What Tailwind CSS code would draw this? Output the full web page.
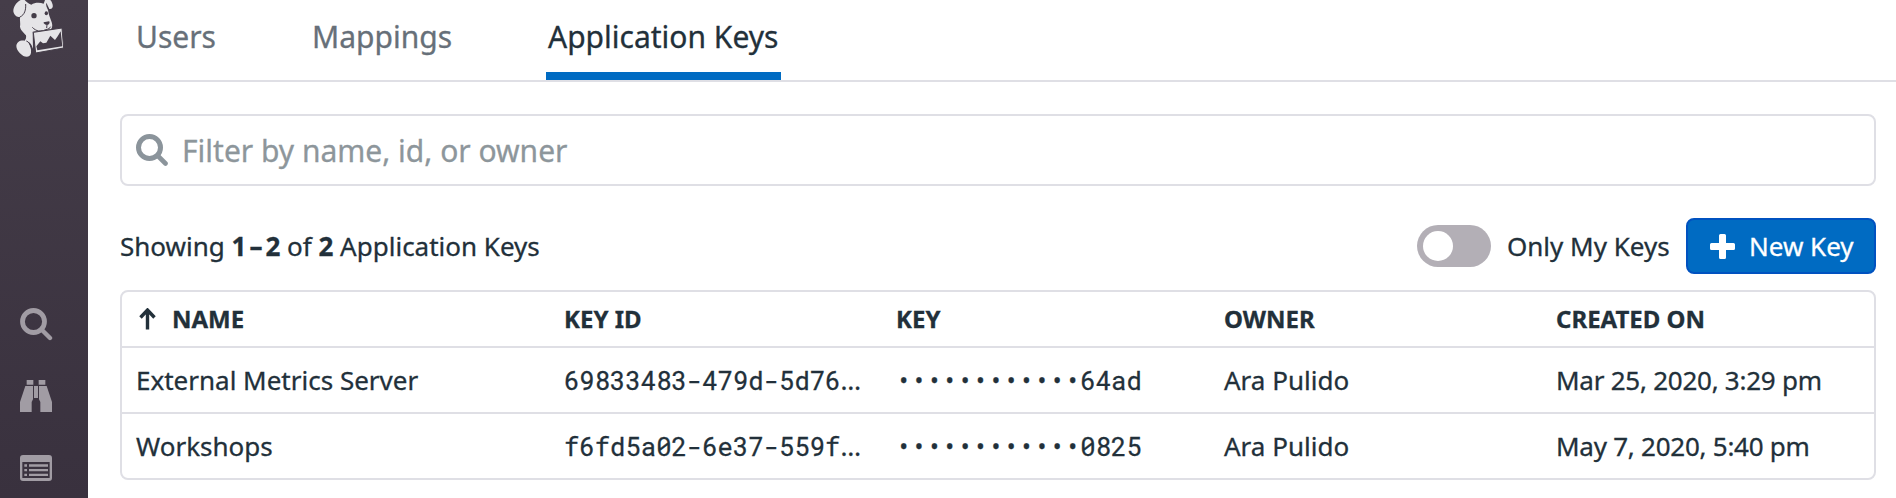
<!DOCTYPE html>
<html lang="en">
<head>
<meta charset="utf-8">
<title>Application Keys</title>
<script src="https://cdn.jsdelivr.net/npm/@tailwindcss/browser@4"></script>
</head>
<body class="h-[498px] w-[1896px] overflow-hidden bg-white font-['Noto_Sans',sans-serif] text-[26px] text-[#22303a] [-webkit-text-stroke:0.3px]">
<div class="flex h-full">
  <aside class="flex w-[88px] shrink-0 flex-col bg-linear-to-b from-[#453d49] to-[#39313e]">
    <svg class="h-[60px] w-[88px]" viewBox="0 0 264 180" fill="#e5e4e7">
      <path d="M62 0 C48 8 40 20 40 34 C42 46 52 54 60 50 C59 62 62 70 60 80 C62 92 72 98 78 106 C80 114 76 120 74 122 C60 120 50 126 49 138 C50 152 60 160 70 168 C80 172 92 171 93 158 C95 148 90 136 84 126 C92 128 96 138 99 146 L98 95 L152 88 C158 84 158 74 154 64 C150 52 146 44 144 30 C140 22 137 14 139 8 L148 27 C156 28 160 22 158 14 C156 6 153 2 151 0 L135 0 L131 11 C120 7 104 7 94 14 C85 12 78 4 74 0 Z"/>
      <g fill="#443c48">
        <ellipse cx="102" cy="47" rx="8" ry="8"/>
        <ellipse cx="139" cy="40" rx="5" ry="6"/>
        <path d="M131 67 L147 64 C150 66 149 70 147 72 C142 78 135 74 131 70 Z"/>
      </g>
      <path d="M77 12 C78 30 74 44 60 51 M97 82 C108 94 124 97 136 89 C146 88 150 84 152 80 M141 74 L140 84 M79 123 C88 126 92 134 93 142" fill="none" stroke="#443c48" stroke-width="3"/>
      <path d="M100 97 L186 84 L191 144 L107 159 Z" stroke="#443c48" stroke-width="3"/>
      <path d="M112 151 L109 139 L121 124 L129 130 L139 128 L151 107 L165 120 L173 109 L182 94 L187 139 Z" fill="#443c48"/>
    </svg>
    <nav class="mt-[247px] flex flex-col items-start pl-5">
      <svg class="h-[34px] w-[34px]" viewBox="0 0 34 34" fill="none" stroke="#a19ca4"><circle cx="13.5" cy="14.5" r="11" stroke-width="4.8"/><path d="M21.5 22.500 L30 31" stroke-width="4.400" stroke-linecap="round"/></svg>
      <svg class="mt-[39px] h-8 w-8" viewBox="0 0 96 96" fill="#a19ca4"><path d="M20 0h20v14H20zM56 0h20v14H56zM16 18h23v40l-4 8v30H0V66zM42 18h12v36H42zM57 18h23l16 48v30H61V66l-4-8z"/></svg>
      <svg class="mt-[43px] h-[26px] w-8" viewBox="0 0 96 78" fill="#a19ca4"><path fill-rule="evenodd" d="M9 0h78q9 0 9 9v60q0 9-9 9H9q-9 0-9-9V9q0-9 9-9zM7 21v48h82V21z"/><path d="M13 28h8v7h-8zM27 28h57v7H27zM13 42h8v7h-8zM27 42h57v7H27zM13 56h8v7h-8zM27 56h57v7H27z"/></svg>
    </nav>
  </aside>
  <div class="min-w-0 flex-1">
    <nav class="flex h-[82px] items-stretch border-b-2 border-[#dfdfe5] pl-[46px] text-[30px] leading-[74px] text-[#677079]">
      <a class="w-[84px] whitespace-nowrap px-0.5">Users</a>
      <a class="ml-[92px] w-[144px] whitespace-nowrap px-0.5">Mappings</a>
      <a class="ml-[92px] w-[235px] whitespace-nowrap border-b-8 border-[#006bc2] px-0.5 text-[#22303a]">Application Keys</a>
    </nav>
    <main class="pl-8 pr-5 pt-8">
      <label class="flex h-[72px] items-center rounded-lg border-2 border-[#dfdfe5] pl-3.5 text-[30px] text-[#8d969b]">
        <svg class="mr-3.5 h-8 w-8 shrink-0" viewBox="0 0 32 32" fill="none" stroke="#8b949b"><circle cx="13.500" cy="13.500" r="11" stroke-width="5"/><path d="M21.500 21.500 L29.500 29.500" stroke-width="4.600" stroke-linecap="round"/></svg>
        <span class="whitespace-nowrap">Filter by name, id, or owner</span>
      </label>
      <div class="mt-8 flex h-14 items-center">
        <p class="whitespace-nowrap">Showing <b>1<span class="mx-[3px]">–</span>2</b> of <b>2</b> Application Keys</p>
        <div class="ml-auto h-[42px] w-[74px] rounded-full bg-[#b3afb6] p-1.5"><div class="h-[30px] w-[30px] rounded-full bg-white"></div></div>
        <span class="ml-4 w-[179px] whitespace-nowrap">Only My Keys</span>
        <button class="flex h-14 w-[190px] items-center rounded-lg border-2 border-[#0052c0] bg-[#006bc2] pl-[22px] text-white">
          <svg class="mr-3.5 h-[25px] w-[25px]" viewBox="0 0 25 25" fill="currentColor"><path d="M10.500 0h4q1.500 0 1.500 1.500V9h7.500q1.500 0 1.500 1.500v4q0 1.500-1.500 1.500H16v7.500q0 1.500-1.500 1.500h-4Q9 25 9 23.500V16H1.500Q0 16 0 14.500v-4Q0 9 1.500 9H9V1.500Q9 0 10.500 0z"/></svg>
          <span class="whitespace-nowrap">New Key</span>
        </button>
      </div>
      <section class="mt-4 rounded-lg border-2 border-[#dfdfe5]">
        <div class="grid h-[56px] grid-cols-[428px_332px_328px_332px_1fr] items-center border-b-2 border-[#dfdfe5] pl-3.5 text-[24px] font-bold">
          <div class="flex items-center"><svg class="ml-[3px] mr-4 h-[22px] w-[17px]" viewBox="0 0 17 22" fill="none" stroke="currentColor" stroke-width="3.400"><path d="M8.500 21.500V3M1.500 9.500l7-7.500 7 7.500"/></svg>NAME</div>
          <div>KEY ID</div><div>KEY</div><div>OWNER</div><div>CREATED ON</div>
        </div>
        <div class="grid h-[66px] grid-cols-[428px_332px_328px_332px_1fr] items-center border-b-2 border-[#dfdfe5] pl-3.5 whitespace-nowrap">
          <div>External Metrics Server</div>
          <div><span class="font-['Roboto_Mono',monospace] text-[25.6px]">69833483-479d-5d76</span>…</div>
          <div class="font-['Roboto_Mono',monospace] text-[25.6px]">••••••••••••64ad</div>
          <div>Ara Pulido</div><div class="tracking-[-0.25px]">Mar 25, 2020, 3:29 pm</div>
        </div>
        <div class="grid h-16 grid-cols-[428px_332px_328px_332px_1fr] items-center pl-3.5 whitespace-nowrap">
          <div>Workshops</div>
          <div><span class="font-['Roboto_Mono',monospace] text-[25.6px]">f6fd5a02-6e37-559f</span>…</div>
          <div class="font-['Roboto_Mono',monospace] text-[25.6px]">••••••••••••0825</div>
          <div>Ara Pulido</div><div class="tracking-[-0.25px]">May 7, 2020, 5:40 pm</div>
        </div>
      </section>
    </main>
  </div>
</div>
</body>
</html>
